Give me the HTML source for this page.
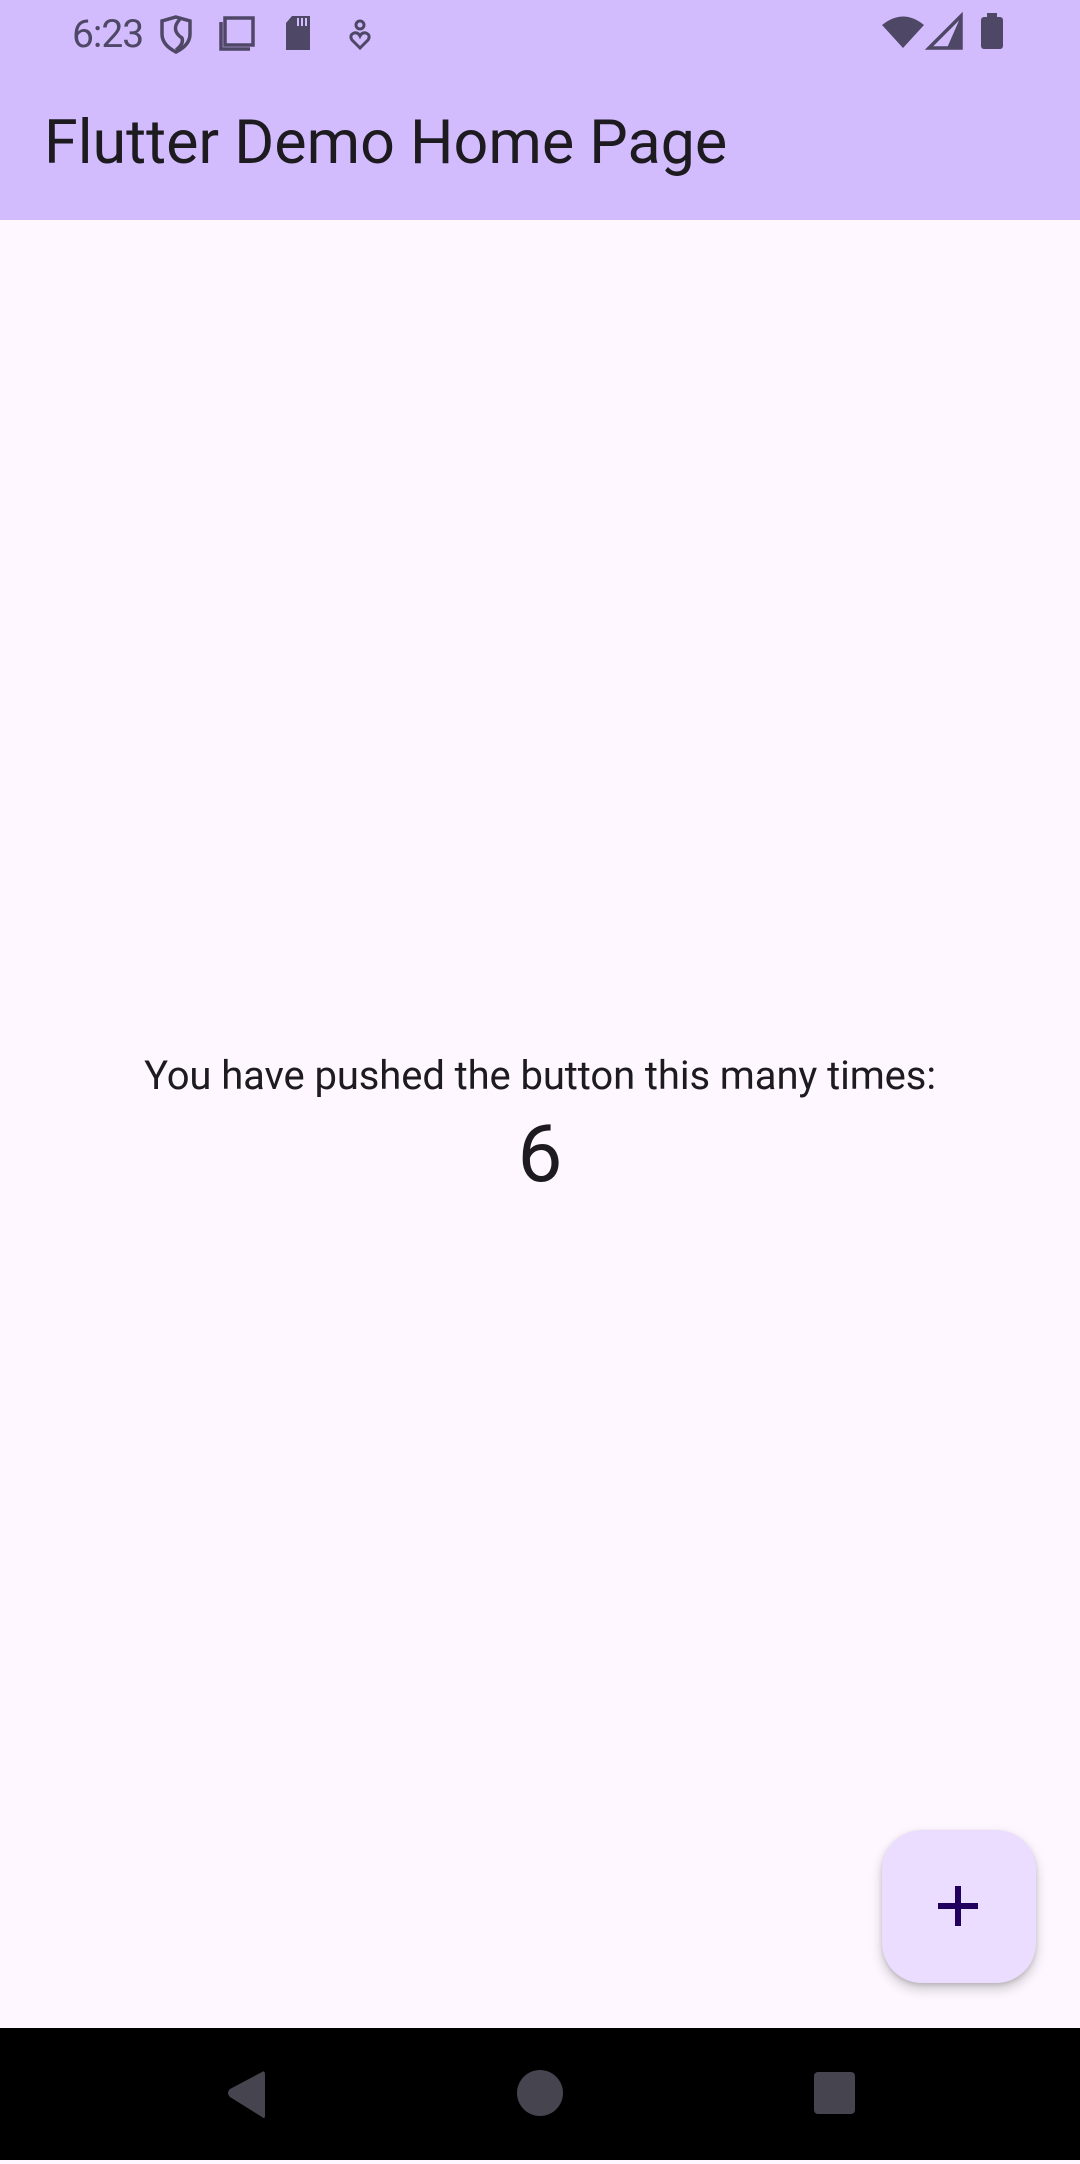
<!DOCTYPE html>
<html><head><meta charset="utf-8"><style>
html,body{margin:0;padding:0;}
body{width:1080px;height:2160px;position:relative;overflow:hidden;background:#fef7ff;font-family:"Roboto","Liberation Sans",sans-serif;}
.bar{position:absolute;left:0;top:0;width:1080px;height:220px;background:#d3bcfd;}
.time{position:absolute;left:72px;top:12px;font-size:39px;color:#4f4766;line-height:44px;letter-spacing:-1px;}
.title{position:absolute;left:44px;top:107px;font-size:61px;color:#1d1b20;line-height:70px;}
.txt{position:absolute;left:0;width:1080px;text-align:center;color:#1d1b20;}
.fab{position:absolute;left:882px;top:1830px;width:154px;height:153px;border-radius:40px;background:#eaddff;box-shadow:0 6px 12px rgba(0,0,0,0.2),0 2px 4px rgba(0,0,0,0.12);}
.nav{position:absolute;left:0;top:2028px;width:1080px;height:132px;background:#000;}
</style></head><body>
<div class="bar">
<div class="time">6:23</div>
<svg style="position:absolute;left:0;top:0" width="1080" height="70">
 <g fill="none" stroke="#4f4766" stroke-width="3.5">
  <path d="M176 17 L190 21 L190 34 Q190 45 176 52 Q162 45 162 34 L162 21 Z"/>
  <path d="M180 19 Q170 30 182 38 Q184 44 176 50"/>
  <rect x="225" y="18" width="28" height="27"/>
  <path d="M221 22 V49 H250"/>
 </g>
 <path d="M292 16 H310 V50 H286 V23 Z" fill="#4f4766"/>
 <g stroke="#d3bcfd" stroke-width="2"><path d="M298 18 V26 M302 18 V26 M306 18 V26"/></g>
 <g fill="none" stroke="#4f4766" stroke-width="3">
  <circle cx="360" cy="25" r="4"/>
  <path d="M360 48 L352 40 Q349 35 354 33 Q358 32 360 36 Q362 32 366 33 Q371 35 368 40 Z"/>
 </g>
 <path d="M882 25 Q903 8 924 25 L903 48 Z" fill="#4f4766"/>
 <path d="M961 16 L961 48 L929 48 Z" fill="none" stroke="#4f4766" stroke-width="3.5"/>
 <path d="M961 16 L961 48 L947 48 Z" fill="#4f4766"/>
 <rect x="981" y="17" width="22" height="32" rx="3" fill="#4f4766"/>
 <rect x="987" y="13" width="10" height="6" fill="#4f4766"/>
</svg>
<div class="title">Flutter Demo Home Page</div>
</div>
<div class="txt" style="top:1050px;font-size:40px;line-height:52px;letter-spacing:-0.1px;">You have pushed the button this many times:</div>
<div class="txt" style="top:1106px;font-size:80px;line-height:96px;">6</div>
<div class="fab">
<svg width="154" height="153"><path d="M76 56 V96 M56 76 H96" stroke="#21005d" stroke-width="6"/></svg>
</div>
<div class="nav">
<svg width="1080" height="132">
 <path d="M262 44 Q265 42 265 47 V87 Q265 92 262 89 L230 69 Q226 65 230 61 Z" fill="#46454f"/>
 <ellipse cx="540" cy="65" rx="23" ry="23" fill="#46454f"/>
 <rect x="814" y="44" width="41" height="42" rx="4" fill="#46454f"/>
</svg>
</div>
</body></html>
